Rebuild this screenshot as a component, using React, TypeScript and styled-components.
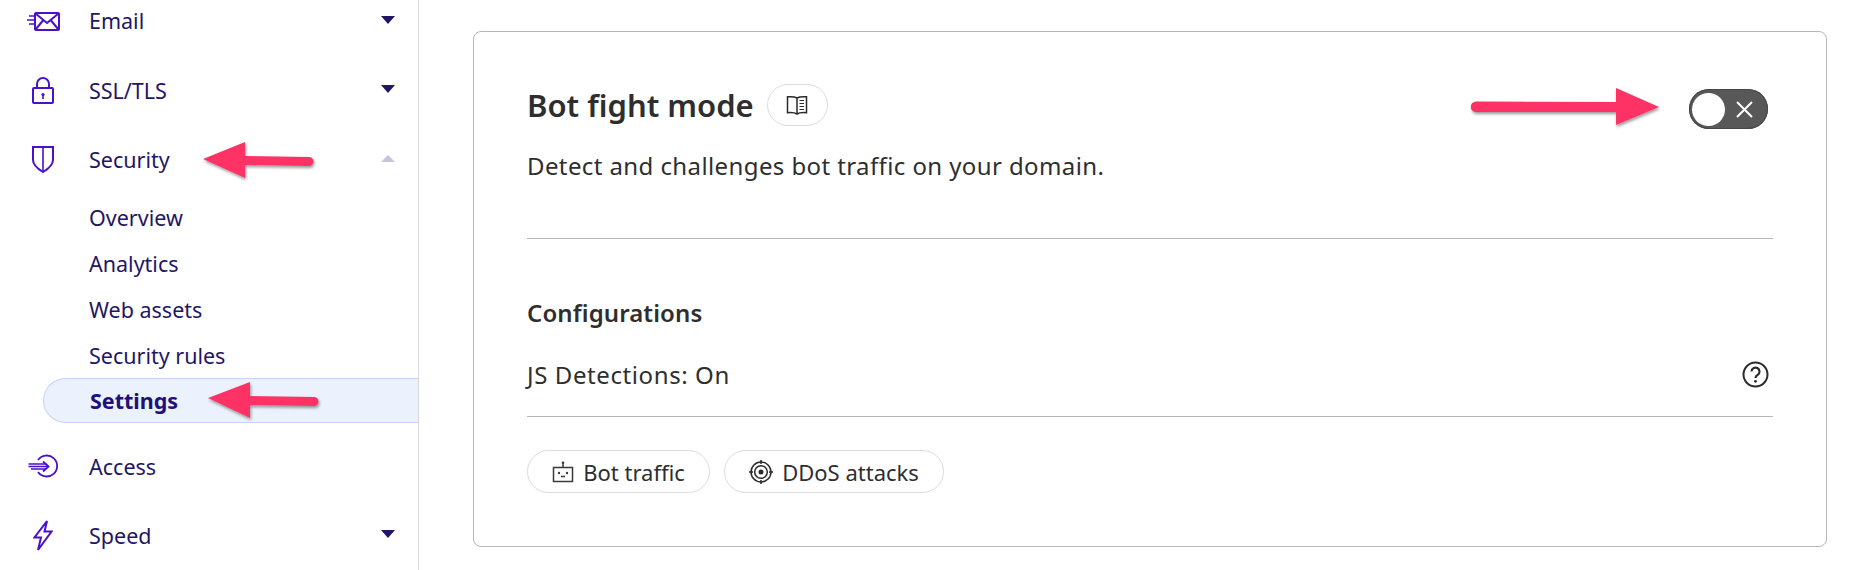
import React from "react";
import styled, { createGlobalStyle } from "styled-components";

const Global = createGlobalStyle`
  html, body { margin: 0; padding: 0; background: #fff; }
  body { font-family: "Noto Sans", "Open Sans", sans-serif; overflow: hidden; }
`;

const Page = styled.div`
  position: relative;
  display: flex;
  width: 1862px;
  height: 570px;
  overflow: hidden;
  background: #fff;
`;

const Sidebar = styled.nav`
  flex: 0 0 418px;
  height: 570px;
  overflow: hidden;
  border-right: 1px solid #d9d9d9;
  display: flex;
  flex-direction: column;
`;

const NavRow = styled.div<{ $after?: number; $height?: number }>`
  flex: none;
  display: flex;
  align-items: center;
  height: ${(p) => p.$height ?? 42}px;
  margin-bottom: ${(p) => p.$after ?? 27}px;
  padding-right: 23px;
  color: #1f1665;
  font-size: 21.5px;
`;

const IconSlot = styled.span`
  flex: 0 0 89px;
  display: flex;
  justify-content: center;
  padding-right: 3px;
  box-sizing: border-box;
  color: #4a10cc;
`;

const NavLabel = styled.span`
  flex: 1;
`;

const Caret = styled.span<{ $open?: boolean }>`
  width: 0;
  height: 0;
  border-left: 7px solid transparent;
  border-right: 7px solid transparent;
  ${(p) =>
    p.$open
      ? "border-bottom: 7px solid #c7c3dd; margin-top: -1px;"
      : "border-top: 8px solid #1f1665; margin-top: -2px;"}
`;

const SubList = styled.div`
  flex: none;
  display: flex;
  flex-direction: column;
  margin-bottom: 22px;
`;

const SubItem = styled.div<{ $active?: boolean }>`
  flex: none;
  display: flex;
  align-items: center;
  height: ${(p) => (p.$active ? 45 : 46)}px;
  margin-left: ${(p) => (p.$active ? 43 : 0)}px;
  padding-left: ${(p) => (p.$active ? 46 : 89)}px;
  box-sizing: border-box;
  color: ${(p) => (p.$active ? "#22107a" : "#1f1665")};
  font-size: 21.5px;
  font-weight: ${(p) => (p.$active ? 700 : 400)};
  ${(p) =>
    p.$active &&
    `background: #ebf1fd;
     border: 1px solid #c3d4f8;
     border-right: 0;
     border-radius: 23px 0 0 23px;`}
`;

const Main = styled.main`
  flex: 1;
  padding: 31px 35px 0 54px;
`;

const Card = styled.section`
  box-sizing: border-box;
  width: 1354px;
  height: 516px;
  border: 1px solid #b6b6b6;
  border-radius: 8px;
  padding: 52px 53px 0 53px;
  color: #2e2e2e;
  display: flex;
  flex-direction: column;
`;

const CardHead = styled.div`
  display: flex;
  align-items: flex-start;
  justify-content: space-between;
  padding-right: 5px;
`;

const TitleRow = styled.div`
  display: flex;
  align-items: center;
  gap: 13px;
  height: 42px;
`;

const Title = styled.h2`
  margin: 0;
  font-size: 31px;
  font-weight: 600;
  line-height: 42px;
  color: #2e2e2e;
`;

const DocBadge = styled.span`
  box-sizing: border-box;
  width: 61px;
  height: 42px;
  border: 1px solid #dcdcdc;
  border-radius: 21px;
  display: flex;
  align-items: center;
  justify-content: center;
`;

const Toggle = styled.span`
  box-sizing: border-box;
  width: 79px;
  height: 40px;
  margin-top: 5px;
  border-radius: 20px;
  background: #585858;
  box-shadow: inset 0 0 0 1px #474747;
  display: flex;
  align-items: center;
  justify-content: space-between;
  padding: 0 15px 0 3px;
`;

const Knob = styled.span`
  width: 33px;
  height: 33px;
  border-radius: 50%;
  background: #fff;
`;

const Description = styled.p`
  margin: 21px 0 0;
  font-size: 24px;
  letter-spacing: 0.4px;
  line-height: 32px;
  color: #2e2e2e;
`;

const Divider = styled.hr<{ $top: number }>`
  margin: ${(p) => p.$top}px 0 0;
  border: 0;
  height: 1px;
  background: #b6b6b6;
`;

const SectionTitle = styled.h3`
  margin: 58px 0 0;
  font-size: 24px;
  letter-spacing: 0.1px;
  font-weight: 600;
  line-height: 32px;
`;

const ConfigRow = styled.div`
  display: flex;
  align-items: center;
  justify-content: space-between;
  margin-top: 29px;
  height: 32px;
  font-size: 24px;
  letter-spacing: 0.6px;
  padding-right: 4px;
`;

const HelpSlot = styled.span`
  display: flex;
`;

const PillRow = styled.div`
  display: flex;
  gap: 14px;
  margin-top: 33px;
`;

const Pill = styled.span<{ $w: number }>`
  box-sizing: border-box;
  width: ${(p) => p.$w}px;
  height: 43px;
  border: 1px solid #dcdcdc;
  border-radius: 22px;
  display: flex;
  align-items: center;
  justify-content: center;
  gap: 9px;
  font-size: 22px;
  color: #2e2e2e;
`;

const ArrowLayer = styled.svg`
  position: absolute;
  left: 0;
  top: 0;
  pointer-events: none;
`;

const MailIcon = () => (
  <svg width="34" height="20" viewBox="0 0 34 20" fill="none" stroke="currentColor" strokeWidth="2">
    <rect x="9" y="2" width="24" height="17" rx="1" />
    <path d="M9.5 2.5 21 12 32.5 2.5M9.5 18.5 17 9.5M32.5 18.5 25 9.5" />
    <path d="M3 5h5M1 9h7M3 13h5" strokeWidth="1.6" />
  </svg>
);
const LockIcon = () => (
  <svg width="22" height="27" viewBox="0 0 22 27" fill="none" stroke="currentColor" strokeWidth="2">
    <rect x="1" y="11" width="20" height="15" rx="1" />
    <path d="M5 11V7a6 6 0 0 1 12 0v4" />
    <circle cx="11" cy="17.5" r="1.6" fill="currentColor" stroke="none" />
    <path d="M11 18v4" strokeWidth="1.6" />
  </svg>
);
const ShieldIcon = () => (
  <svg width="22" height="28" viewBox="0 0 22 28" fill="none" stroke="currentColor" strokeWidth="2">
    <path d="M1 2h20v13c0 5-5 9-10 12C6 24 1 20 1 15Z" />
    <path d="M11 2v25" strokeWidth="1.6" />
  </svg>
);
const AccessIcon = () => (
  <svg width="30" height="24" viewBox="0 0 30 24" fill="none" stroke="currentColor" strokeWidth="1.8">
    <path d="M10 6a10.500 10.500 0 1 1 0 12" />
    <path d="M0.500 10h18M0.500 12.500h20M3 15h15" strokeWidth="1.300" />
    <path d="M15 7.500 20.500 12.500 15 17.500" />
  </svg>
);
const BoltIcon = () => (
  <svg width="20" height="33" viewBox="0 0 20 33" fill="none" stroke="currentColor" strokeWidth="2" strokeLinejoin="miter">
    <path d="M14 2 1.500 18.500H8L5 31 18.500 12.500H11.500Z" />
  </svg>
);
const BookIcon = () => (
  <svg width="22" height="22" viewBox="0 0 22 22" fill="none" stroke="#2b2b2b" strokeWidth="1.500">
    <path d="M11 4C9 2.800 5 2.500 1.500 2.800V18.700C5 18.400 9 18.700 11 20 13 18.700 17 18.400 20.500 18.700V2.800C17 2.500 13 2.800 11 4ZM11 4V20" />
    <path d="M13.500 6.500h4.500M13.500 9.500h4.500M13.500 12.500h4.500M13.500 15.500h4.500" strokeWidth="1.200" />
  </svg>
);
const CloseIcon = () => (
  <svg width="17" height="17" viewBox="0 0 17 17" stroke="#fff" strokeWidth="2">
    <path d="M1 1 16 16M16 1 1 16" />
  </svg>
);
const HelpIcon = () => (
  <svg width="27" height="27" viewBox="0 0 27 27" fill="none" stroke="#2b2b2b" strokeWidth="2">
    <circle cx="13.500" cy="13.500" r="12" />
    <path d="M9.500 10.500a4 4 0 1 1 6.200 3.400c-1.400.9-2.200 1.500-2.200 3" strokeWidth="2.200" />
    <circle cx="13.500" cy="20.300" r="1.400" fill="#2b2b2b" stroke="none" />
  </svg>
);
const BotIcon = () => (
  <svg width="22" height="22" viewBox="0 0 22 22" fill="none" stroke="#3a3a3a" strokeWidth="1.500">
    <rect x="1.500" y="6.500" width="19" height="14" />
    <path d="M11 6V2" />
    <circle cx="11" cy="1.800" r="1.300" fill="#3a3a3a" stroke="none" />
    <circle cx="7" cy="12" r="1.200" fill="#3a3a3a" stroke="none" />
    <circle cx="15" cy="12" r="1.200" fill="#3a3a3a" stroke="none" />
    <path d="M9 15.500h4" />
  </svg>
);
const TargetIcon = () => (
  <svg width="24" height="24" viewBox="0 0 24 24" fill="none" stroke="#2b2b2b" strokeWidth="1.500">
    <circle cx="12" cy="12" r="10" />
    <circle cx="12" cy="12" r="6.300" />
    <circle cx="12" cy="12" r="2.500" fill="#2b2b2b" stroke="none" />
    <path d="M12 0v4M12 20v4M0 12h4M20 12h4" />
  </svg>
);

export default function App() {
  return (
    <Page>
      <Global />
      <Sidebar>
        <NavRow $height={41} $after={28}>
          <IconSlot><MailIcon /></IconSlot>
          <NavLabel>Email</NavLabel>
          <Caret />
        </NavRow>
        <NavRow>
          <IconSlot><LockIcon /></IconSlot>
          <NavLabel>SSL/TLS</NavLabel>
          <Caret />
        </NavRow>
        <NavRow $after={14}>
          <IconSlot><ShieldIcon /></IconSlot>
          <NavLabel>Security</NavLabel>
          <Caret $open />
        </NavRow>
        <SubList>
          <SubItem>Overview</SubItem>
          <SubItem>Analytics</SubItem>
          <SubItem>Web assets</SubItem>
          <SubItem>Security rules</SubItem>
          <SubItem $active>Settings</SubItem>
        </SubList>
        <NavRow>
          <IconSlot><AccessIcon /></IconSlot>
          <NavLabel>Access</NavLabel>
        </NavRow>
        <NavRow>
          <IconSlot><BoltIcon /></IconSlot>
          <NavLabel>Speed</NavLabel>
          <Caret />
        </NavRow>
      </Sidebar>
      <Main>
        <Card>
          <CardHead>
            <TitleRow>
              <Title>Bot fight mode</Title>
              <DocBadge><BookIcon /></DocBadge>
            </TitleRow>
            <Toggle>
              <Knob />
              <CloseIcon />
            </Toggle>
          </CardHead>
          <Description>Detect and challenges bot traffic on your domain.</Description>
          <Divider $top={56} />
          <SectionTitle>Configurations</SectionTitle>
          <ConfigRow>
            <span>JS Detections: On</span>
            <HelpSlot><HelpIcon /></HelpSlot>
          </ConfigRow>
          <Divider $top={26} />
          <PillRow>
            <Pill $w={183}><BotIcon />Bot traffic</Pill>
            <Pill $w={220}><TargetIcon />DDoS attacks</Pill>
          </PillRow>
        </Card>
      </Main>
      <ArrowLayer width="1862" height="570" viewBox="0 0 1862 570">
        <defs>
          <filter id="arrowShadow" x="-10%" y="-30%" width="120%" height="170%">
            <feDropShadow dx="1" dy="2" stdDeviation="1.500" floodColor="#000" floodOpacity="0.4" />
          </filter>
        </defs>
        <g fill="#ff3366" stroke="none" filter="url(#arrowShadow)">
          <path d="M203 159 245 142V156L309 157a4.500 4.500 0 0 1 0 9L245 165V178Z" />
          <path d="M208 398 250 382V396L314 397a4.500 4.500 0 0 1 0 9L250 405V418Z" />
          <path d="M1659 107 1616 88V102L1476 101.500a5 5 0 0 0 0 10.500L1616 112V125Z" />
        </g>
      </ArrowLayer>
    </Page>
  );
}
